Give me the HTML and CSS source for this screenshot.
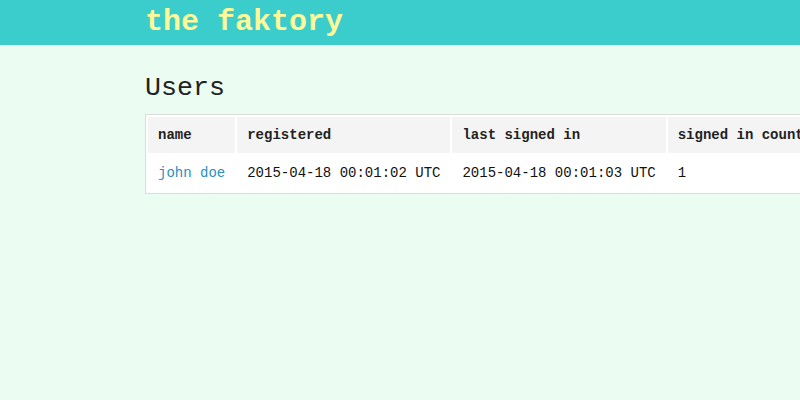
FILE: index.html
```html
<!DOCTYPE html>
<html>
<head>
<meta charset="utf-8">
<title>the faktory</title>
<link rel="stylesheet" href="styles.css">
</head>
<body>
<header class="topbar">
  <div class="container">
    <a class="brand" href="#">the faktory</a>
  </div>
</header>
<main class="container">
  <h2 class="page-title">Users</h2>
  <table class="users">
    <thead>
      <tr>
        <th>name</th>
        <th>registered</th>
        <th>last signed in</th>
        <th>signed in count</th>
      </tr>
    </thead>
    <tbody>
      <tr>
        <td><a class="user-link" href="#">john doe</a></td>
        <td>2015-04-18 00:01:02 UTC</td>
        <td>2015-04-18 00:01:03 UTC</td>
        <td>1</td>
      </tr>
    </tbody>
  </table>
</main>
</body>
</html>
```

FILE: styles.css
```css
html, body {
  margin: 0;
  padding: 0;
}
body {
  background: #ebfcf2;
  color: #222;
  font-family: "Liberation Mono", "Courier New", monospace;
  overflow: hidden;
}
.container {
  width: 510px;
  margin: 0 auto;
}
.topbar {
  background: #3bcccc;
  height: 45px;
}
.brand {
  display: block;
  font-size: 30px;
  font-weight: bold;
  line-height: 45px;
  color: #fdf998;
  text-decoration: none;
  white-space: nowrap;
}
.page-title {
  font-size: 26.67px;
  font-weight: normal;
  line-height: 30px;
  margin: 28px 0 11px;
  color: #222;
}
.users {
  background: #fff;
  border: 1px solid #dcdcdc;
  border-spacing: 2px;
  font-size: 14px;
  white-space: nowrap;
}
.users th,
.users td {
  padding: 10px;
  line-height: 16px;
  text-align: left;
}
.users th {
  background: #f4f4f4;
  font-weight: bold;
  color: #222;
}
.users td {
  color: #111;
}
.user-link {
  color: #2a8fbd;
  text-decoration: none;
}
```
